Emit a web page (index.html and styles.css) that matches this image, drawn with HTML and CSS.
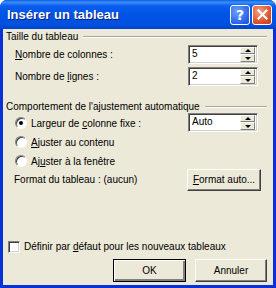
FILE: index.html
```html
<!DOCTYPE html>
<html lang="fr">
<head>
<meta charset="utf-8">
<link rel="stylesheet" href="styles.css">
</head>
<body>
<div class="window">
  <div class="titlebar">
    <span class="title">Insérer un tableau</span>
    <div class="tbtns">
      <span class="tb help">?</span>
      <span class="tb close"><svg width="11" height="11" viewBox="0 0 11 11"><path d="M1.5 1.5 L9.5 9.5 M9.5 1.5 L1.5 9.5" stroke="#fff" stroke-width="2.2" stroke-linecap="square"/></svg></span>
    </div>
  </div>
  <div class="body">
    <div class="group-head"><span class="gt">Taille du tableau</span><span class="rule"></span></div>
    <div class="row r1">
      <span class="lbl"><u>N</u>ombre de colonnes :</span>
      <div class="spin"><span class="val">5</span><span class="arrows"><span class="ab up"></span><span class="ab dn"></span></span></div>
    </div>
    <div class="row r2">
      <span class="lbl">Nombre de <u>l</u>ignes :</span>
      <div class="spin"><span class="val">2</span><span class="arrows"><span class="ab up"></span><span class="ab dn"></span></span></div>
    </div>
    <div class="group-head g2"><span class="gt">Comportement de l'ajustement automatique</span><span class="rule"></span></div>
    <div class="row r3">
      <span class="lbl"><span class="radio on"></span>Largeur de <u>c</u>olonne fixe :</span>
      <div class="spin"><span class="val">Auto</span><span class="arrows"><span class="ab up"></span><span class="ab dn"></span></span></div>
    </div>
    <div class="row r4"><span class="lbl"><span class="radio"></span><u>A</u>juster au contenu</span></div>
    <div class="row r5"><span class="lbl"><span class="radio"></span>Aj<u>u</u>ster à la fenêtre</span></div>
    <div class="row r6">
      <span class="lbl">Format du tableau : (aucun)</span>
      <span class="btn fa"><span><u>F</u>ormat auto...</span></span>
    </div>
    <div class="spacer"></div>
    <div class="row chk-row"><span class="lbl"><span class="check"></span>Définir par <u>d</u>éfaut pour les nouveaux tableaux</span></div>
    <div class="actions">
      <span class="btn ok">OK</span>
      <span class="btn cancel">Annuler</span>
    </div>
  </div>
</div>
</body>
</html>
```

FILE: styles.css
```css
* { box-sizing: border-box; }
html, body { margin: 0; padding: 0; }
body { width: 276px; height: 288px; overflow: hidden; font-family: Tahoma, "Liberation Sans", sans-serif; font-size: 10px; color: #000; }
.window {
  width: 276px; height: 288px;
  background: #0831d9;
  display: flex; flex-direction: column;
  border-radius: 7px 7px 0 0;
  overflow: hidden;
}
.titlebar {
  height: 29px; flex: none;
  display: flex; align-items: center; justify-content: space-between;
  padding: 0 4px 0 7px;
  background: linear-gradient(#0a5fe8 0%, #3d8df5 8%, #0a5ef0 20%, #0054e3 50%, #0250e0 85%, #0043c8 100%);
}
.title {
  color: #fff; font-weight: bold; font-size: 13px;
  font-family: "Liberation Sans", sans-serif;
  text-shadow: 1px 1px 0 #0a1e80;
}
.tbtns { display: flex; gap: 2px; }
.tb {
  width: 20px; height: 20px; border-radius: 3px; border: 1px solid #fff;
  display: flex; align-items: center; justify-content: center;
  color: #fff; font-weight: bold; font-family: "DejaVu Sans", sans-serif; font-size: 14px;
}
.help { background: radial-gradient(circle at 35% 30%, #6fa1fb, #2a63e8 70%, #1c4fd0); }
.close { background: radial-gradient(circle at 35% 30%, #f0a080, #e0552e 60%, #c23c1c); }
.body {
  flex: 1; background: #ece9d8;
  margin: 0 3px 3px 3px;
  padding: 1px 6px 0 3px;
  display: flex; flex-direction: column;
}
.group-head { display: flex; align-items: center; height: 13px; white-space: nowrap; }
.group-head .rule { flex: 1; height: 2px; border-top: 1px solid #aca899; border-bottom: 1px solid #fff; margin-left: 5px; margin-top: 1px; }
.g2 { margin-top: 14px; }
.row { display: flex; align-items: center; justify-content: space-between; padding-left: 9px; padding-right: 9px; }
.r1 { margin-top: 2px; height: 19px; }
.r2 { margin-top: 3px; height: 19px; }
.r3 { margin-top: 0; height: 19px; }
.r4 { height: 19px; }
.r5 { height: 19px; }
.r6 { height: 19px; padding-left: 8px; padding-right: 6px; }
.lbl { white-space: nowrap; }
u { text-decoration: underline; text-underline-offset: 1px; }
.spin {
  width: 70px; height: 19px; background: #fff;
  border-top: 1px solid #808080; border-left: 1px solid #808080;
  border-right: 1px solid #fff; border-bottom: 1px solid #fff;
  box-shadow: inset 1px 1px 0 #404040, inset -1px -1px 0 #d4d0c8;
  display: flex; align-items: center; justify-content: space-between;
  padding: 1px 2px 2px 3px;
}
.val { line-height: 12px; }
.arrows { width: 15px; height: 15px; display: flex; flex-direction: column; }
.ab {
  flex: 1; background: #ece9d8; position: relative;
  border-top: 1px solid #fff; border-left: 1px solid #fff;
  border-right: 1px solid #808080; border-bottom: 1px solid #808080;
}
.ab::after { content: ""; position: absolute; left: 4px; width: 0; height: 0; border-left: 3px solid transparent; border-right: 3px solid transparent; }
.up::after { top: 1px; border-bottom: 3px solid #000; }
.dn::after { top: 2px; border-top: 3px solid #000; }
.radio {
  display: inline-block; vertical-align: -2px;
  width: 12px; height: 12px; border-radius: 50%; background: #fff; margin-right: 4px;
  border: 1px solid; border-color: #808080 #fff #fff #808080;
  box-shadow: inset 1px 1px 0 #404040;
  position: relative;
}
.radio.on::after { content: ""; position: absolute; left: 3px; top: 3px; width: 4px; height: 4px; border-radius: 50%; background: #000; }
.check {
  display: inline-block; vertical-align: -3px;
  width: 12px; height: 12px; background: #fff; margin-right: 4px;
  border: 1px solid; border-color: #808080 #fff #fff #808080;
  box-shadow: inset 1px 1px 0 #404040, inset -1px -1px 0 #d4d0c8;
}
.btn {
  display: flex; align-items: center; justify-content: center; white-space: nowrap;
  width: 73px; height: 23px; background: #ece9d8; flex: none;
  border: 1px solid; border-color: #fff #404040 #404040 #fff;
  box-shadow: inset -1px -1px 0 #808080;
}
.fa { width: 74px; height: 22px; }
.cancel { width: 72px; }
.spacer { flex: 1; }
.chk-row { padding-left: 2px; height: 14px; }
.actions { display: flex; justify-content: flex-end; gap: 9px; padding-right: 0; margin-top: 5px; margin-bottom: 3px; }
.ok { border: 1px solid #000; box-shadow: inset 1px 1px 0 #fff, inset -2px -2px 0 #808080; }
```
